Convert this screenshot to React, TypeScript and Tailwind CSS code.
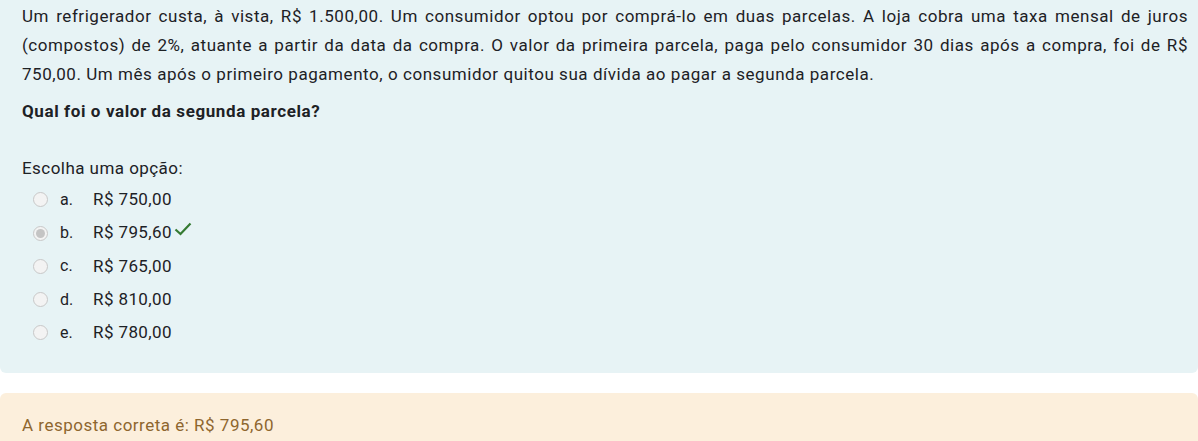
const options = [
  { letter: "a.", value: "R$ 750,00", checked: false },
  { letter: "b.", value: "R$ 795,60", checked: true },
  { letter: "c.", value: "R$ 765,00", checked: false },
  { letter: "d.", value: "R$ 810,00", checked: false },
  { letter: "e.", value: "R$ 780,00", checked: false },
];

function Radio({ checked }: { checked: boolean }) {
  return (
    <span className="flex h-[15px] w-[15px] items-center justify-center rounded-full border border-[#c8c8c8] bg-[#f3f3f3]">
      {checked && <span className="h-[9px] w-[9px] rounded-full bg-[#c4c4c4]" />}
    </span>
  );
}

function Check() {
  return (
    <svg width="18" height="14" viewBox="0 0 18 14" className="ml-[2px] -mt-[8px]">
      <path d="M1.5 7.5 L6.5 12 L16.5 1.5" fill="none" stroke="#357a32" strokeWidth="2.2" />
    </svg>
  );
}

export default function App() {
  return (
    <div className="min-h-screen bg-white text-[17px]" style={{ fontFamily: "Roboto, 'Noto Sans', sans-serif" }}>
      <div className="rounded-b-md bg-[#e7f3f5] pb-[24px] pl-[22px] pr-[10px] pt-[2px] text-[#1d2125]">
        <p className="text-justify leading-[28.8px] tracking-[0.55px]">
          Um refrigerador custa, à vista, R$ 1.500,00. Um consumidor optou por comprá-lo em duas parcelas. A loja cobra uma taxa mensal de juros (compostos) de 2%, atuante a partir da data da compra. O valor da primeira parcela, paga pelo consumidor 30 dias após a compra, foi de R$ 750,00. Um mês após o primeiro pagamento, o consumidor quitou sua dívida ao pagar a segunda parcela.
        </p>
        <p className="mt-[9px] font-bold leading-[28.8px] tracking-[0.6px]">Qual foi o valor da segunda parcela?</p>
        <p className="mt-[28px] leading-[28px] tracking-[0.45px]">Escolha uma opção:</p>
        <div className="mt-[1px] flex flex-col">
          {options.map((o) => (
            <div key={o.letter} className="flex h-[33.25px] items-center pl-[11px]">
              <Radio checked={o.checked} />
              <span className="ml-[12px] w-[33px] text-[16px] text-[#1d2125]">{o.letter}</span>
              <span className="tracking-[0.4px]">{o.value}</span>
              {o.checked && <Check />}
            </div>
          ))}
        </div>
      </div>
      <div className="mt-[20px] rounded-t-md bg-[#fcefdc] px-[22px] pb-[12px] pt-[20px] leading-[24px] tracking-[0.5px] text-[#8e662e]">
        A resposta correta é: R$ 795,60
      </div>
    </div>
  );
}
